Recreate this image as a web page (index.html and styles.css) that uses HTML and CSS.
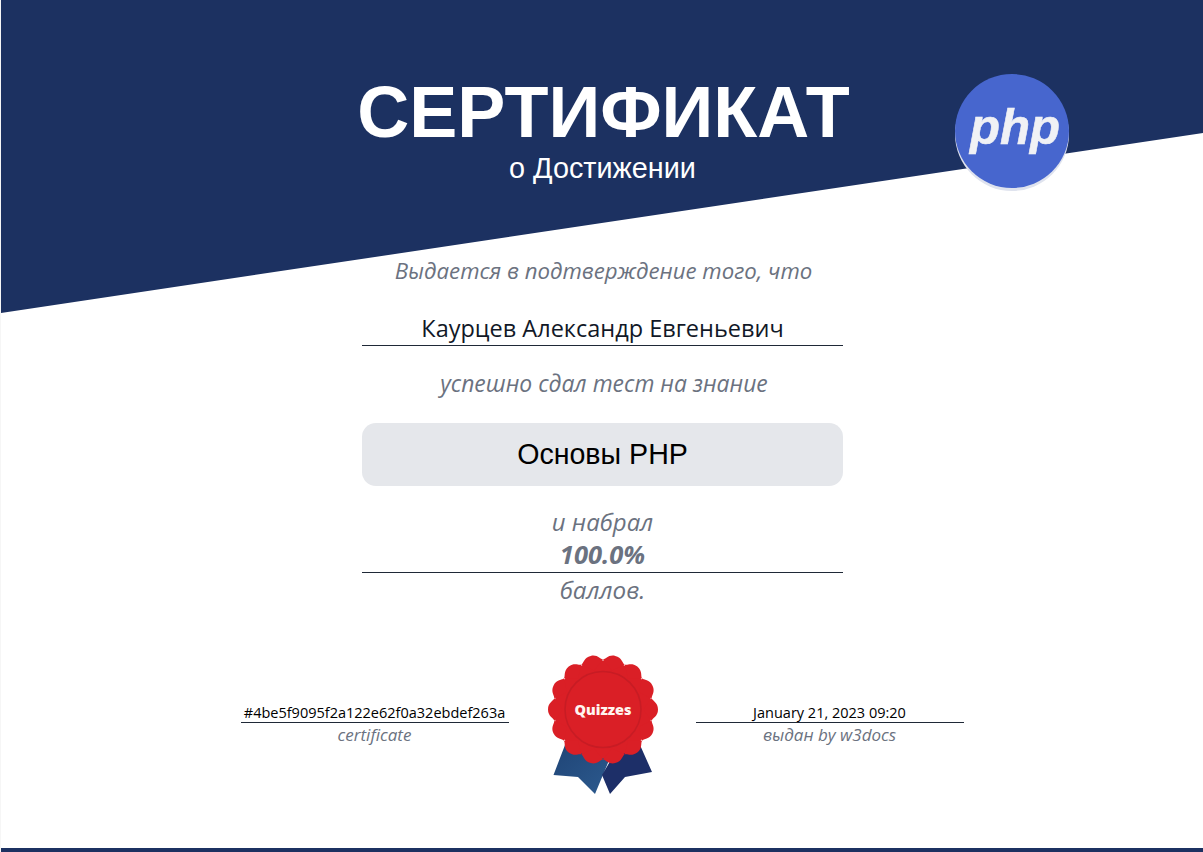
FILE: index.html
```html
<!DOCTYPE html>
<html lang="ru">
<head>
<meta charset="utf-8">
<title>Сертификат</title>
<link rel="stylesheet" href="styles.css">
</head>
<body>
<main class="certificate">
  <div class="banner"></div>
  <svg class="php-logo" viewBox="0 0 116 118" width="116" height="118">
    <circle cx="58" cy="60" r="57" fill="#dfe3ee"/>
    <circle cx="58" cy="57" r="57" fill="#4766ce"/>
    <text x="16" y="70" class="php-text" textLength="90" lengthAdjust="spacingAndGlyphs">php</text>
  </svg>
  <header class="heading">
    <h1 class="title">СЕРТИФИКАТ</h1>
    <p class="subtitle">о Достижении</p>
  </header>
  <section class="body-col">
    <p class="note intro">Выдается в подтверждение того, что</p>
    <p class="name">Каурцев Александр Евгеньевич</p>
    <p class="note passed">успешно сдал тест на знание</p>
    <p class="course">Основы PHP</p>
    <p class="note scored">и набрал</p>
    <p class="score">100.0%</p>
    <p class="note points">баллов.</p>
  </section>
  <footer class="signatures">
    <div class="sign">
      <p class="sign-value">#4be5f9095f2a122e62f0a32ebdef263a</p>
      <p class="sign-label">certificate</p>
    </div>
    <svg class="badge" viewBox="0 0 140 155" width="140" height="155">
      <defs>
        <linearGradient id="ribbonLeft" x1="0" y1="0" x2="1" y2="1">
          <stop offset="0" stop-color="#1f4476"/>
          <stop offset="1" stop-color="#2c5a8e"/>
        </linearGradient>
        <path id="lobe" d="M0,-40 L-11.13,-48.75 C-8.6,-49.3 -7,-55 0,-55 C7,-55 8.6,-49.3 11.13,-48.75 Z"/>
      </defs>
      <polygon points="35,100 23.500,130 48,132 65,149 80,113 60,98" fill="url(#ribbonLeft)"/>
      <polygon points="110,100 122,127 95,132 80,149 72,130 85,108" fill="#1d2f68"/>
      <g class="seal" transform="translate(73 64.500)">
        <circle r="49"/>
        <use href="#lobe" transform="rotate(12.857)"/>
        <use href="#lobe" transform="rotate(38.571)"/>
        <use href="#lobe" transform="rotate(64.286)"/>
        <use href="#lobe" transform="rotate(90)"/>
        <use href="#lobe" transform="rotate(115.714)"/>
        <use href="#lobe" transform="rotate(141.429)"/>
        <use href="#lobe" transform="rotate(167.143)"/>
        <use href="#lobe" transform="rotate(192.857)"/>
        <use href="#lobe" transform="rotate(218.571)"/>
        <use href="#lobe" transform="rotate(244.286)"/>
        <use href="#lobe" transform="rotate(270)"/>
        <use href="#lobe" transform="rotate(295.714)"/>
        <use href="#lobe" transform="rotate(321.429)"/>
        <use href="#lobe" transform="rotate(347.143)"/>
        <circle r="38" class="ring"/>
      </g>
      <text x="73" y="70" class="badge-text" text-anchor="middle" textLength="57" lengthAdjust="spacingAndGlyphs">Quizzes</text>
    </svg>
    <div class="sign">
      <p class="sign-value">January 21, 2023 09:20</p>
      <p class="sign-label">выдан by w3docs</p>
    </div>
  </footer>
  <div class="bottom-bar"></div>
</main>
</body>
</html>
```

FILE: styles.css
```css
* { box-sizing: border-box; }
html, body { margin: 0; height: 100%; background: #fff; }
p, h1 { margin: 0; }

.certificate {
  position: relative;
  width: 1203px;
  height: 852px;
  overflow: hidden;
  display: flex;
  flex-direction: column;
  align-items: center;
  padding-top: 72px;
  font-family: "Open Sans", "Noto Sans", sans-serif;
  box-shadow: inset 1px 0 #f6f6f6;
}

.banner {
  position: absolute;
  inset: 0;
  background: #1c3161;
  clip-path: polygon(1px 0, 1203px 0, 1203px 133px, 1px 313px);
}

.php-logo {
  position: absolute;
  left: 954px;
  top: 74px;
}
.php-text {
  font-family: "Liberation Sans", sans-serif;
  font-weight: 700;
  font-style: italic;
  font-size: 50px;
  fill: #f0f1f5;
  stroke: #f0f1f5;
  stroke-width: 0.6px;
}

.heading {
  position: relative;
  margin-left: 2px;
  text-align: center;
  color: #fff;
  font-family: "Liberation Sans", sans-serif;
}
.title {
  font-size: 72px;
  line-height: 80px;
  font-weight: 700;
  margin-left: 2px;
}
.subtitle {
  font-size: 28.8px;
  line-height: 33px;
  margin-top: 0;
}

.body-col {
  position: relative;
  width: 481px;
  margin-top: 70px;
  margin-left: 2px;
  text-align: center;
}
.note {
  color: #6b7280;
  font-style: italic;
  font-size: 22.2px;
  height: 32px;
  line-height: 30px;
}
.intro { line-height: 32px; padding-left: 2px; }
.name {
  margin-top: 26px;
  color: #111827;
  font-size: 23.5px;
  line-height: 30px;
  border-bottom: 1px solid #1f2937;
  height: 33px;
}
.passed { margin-top: 22px; font-size: 22.9px; padding-left: 3px; line-height: 31px; }
.course {
  margin-top: 23px;
  height: 63px;
  border-radius: 14px;
  background: #e5e7eb;
  color: #000;
  font-family: "Liberation Sans", sans-serif;
  font-size: 28.6px;
  line-height: 63px;
}
.scored { margin-top: 21px; font-size: 24px; }
.score {
  color: #6b7280;
  font-style: italic;
  font-weight: 700;
  font-size: 25.5px;
  line-height: 30px;
  border-bottom: 1px solid #1f2937;
  height: 34px;
}
.points { margin-top: 1px; font-size: 24.2px; line-height: 32px; }

.signatures {
  display: flex;
  justify-content: center;
  align-items: flex-start;
  margin-top: 39px;
  margin-left: 1px;
  position: relative;
}
.sign {
  width: 268px;
  margin-top: 60px;
  text-align: center;
}
.badge { display: block; margin: 0 26px 0 21px; }
.sign-value {
  height: 18px;
  color: #000;
  font-size: 14.5px;
  line-height: 15px;
  border-bottom: 1px solid #1f2937;
}
.sign-label {
  margin-top: 0;
  color: #6b7280;
  font-style: italic;
  font-size: 17px;
  line-height: 24px;
}

.seal { fill: #da1f26; }
.ring {
  fill: none;
  stroke: #c71c24;
  stroke-width: 1.5;
}
.badge-text {
  font-family: "Open Sans", sans-serif;
  font-weight: 800;
  font-size: 14.5px;
  fill: #fff5f0;
}

.bottom-bar {
  position: absolute;
  left: 1px;
  right: 0;
  bottom: 0;
  height: 4px;
  background: #1c3161;
}
```
